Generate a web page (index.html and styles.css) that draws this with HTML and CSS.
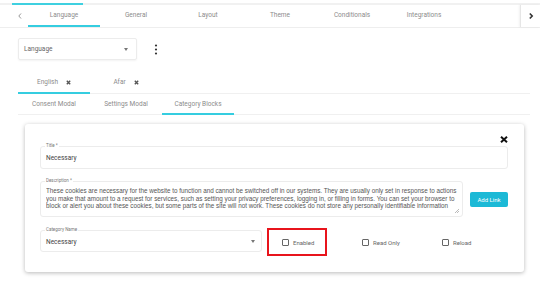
FILE: index.html
```html
<!DOCTYPE html>
<html lang="en">
<head>
    <meta charset="UTF-8">
    <meta name="viewport" content="width=device-width, initial-scale=1.0">
    <title>Cookie Consent Editor</title>
    <link rel="stylesheet" href="styles.css">
</head>
<body>
    <div class="progress"><div class="progress-bar"></div></div>

    <div class="main-tabs">
        <button class="scroll-btn left">
            <svg width="6" height="8" viewBox="0 0 6 8"><polyline points="4,1.5 1.8,4 4,6.5" fill="none" stroke="#999" stroke-width="1"/></svg>
        </button>
        <div class="tab active">Language</div>
        <div class="tab">General</div>
        <div class="tab">Layout</div>
        <div class="tab">Theme</div>
        <div class="tab">Conditionals</div>
        <div class="tab">Integrations</div>
        <div class="spacer"></div>
        <button class="scroll-btn right">
            <svg width="6" height="8" viewBox="0 0 6 8"><polyline points="1.8,1.5 4.2,4 1.8,6.5" fill="none" stroke="#333" stroke-width="1.6"/></svg>
        </button>
    </div>

    <div class="content">
        <div class="lang-row">
            <div class="select">
                <span>Language</span>
                <span class="caret"></span>
            </div>
            <button class="kebab">
                <svg width="4" height="11" viewBox="0 0 4 11"><circle cx="2" cy="1.5" r="1.1" fill="#333"/><circle cx="2" cy="5.5" r="1.1" fill="#333"/><circle cx="2" cy="9.5" r="1.1" fill="#333"/></svg>
            </button>
        </div>

        <div class="sub-tabs langs">
            <div class="tab active">English <svg class="x" width="5" height="5" viewBox="0 0 5 5"><path d="M0.8 0.8L4.2 4.2M4.2 0.8L0.8 4.2" stroke="#555" stroke-width="1.4"/></svg></div>
            <div class="tab">Afar <svg class="x" width="5" height="5" viewBox="0 0 5 5"><path d="M0.8 0.8L4.2 4.2M4.2 0.8L0.8 4.2" stroke="#555" stroke-width="1.4"/></svg></div>
        </div>

        <div class="sub-tabs">
            <div class="tab">Consent Modal</div>
            <div class="tab">Settings Modal</div>
            <div class="tab active">Category Blocks</div>
        </div>

        <div class="card">
            <div class="card-head">
                <button class="close">
                    <svg width="8" height="7" viewBox="0 0 8 7"><path d="M1 0.8L7 6.2M7 0.8L1 6.2" stroke="#111" stroke-width="2"/></svg>
                </button>
            </div>

            <fieldset class="field">
                <legend>Title *</legend>
                <div class="value">Necessary</div>
            </fieldset>

            <div class="desc-row">
                <fieldset class="field desc">
                    <legend>Description *</legend>
                    <div class="text">These cookies are necessary for the website to function and cannot be switched off in our systems. They are usually only set in response to actions<br>you make that amount to a request for services, such as setting your privacy preferences, logging in, or filling in forms. You can set your browser to<br>block or alert you about these cookies, but some parts of the site will not work. These cookies do not store any personally identifiable information</div>
                    <span class="grip"></span>
                </fieldset>
                <button class="add-link">Add Link</button>
            </div>

            <div class="cat-row">
                <fieldset class="field cat">
                    <legend>Category Name</legend>
                    <div class="value">Necessary <span class="caret"></span></div>
                </fieldset>
                <label class="check"><span class="box"></span>Enabled</label>
                <label class="check"><span class="box"></span>Read Only</label>
                <label class="check"><span class="box"></span>Reload</label>
                <div class="highlight"></div>
            </div>
        </div>
    </div>
</body>
</html>
```

FILE: styles.css
```css
* {
    margin: 0;
    padding: 0;
    box-sizing: border-box;
}

body {
    font-family: Roboto, "Liberation Sans", sans-serif;
    background: #fff;
    color: #666;
    width: 540px;
    height: 281px;
    overflow: hidden;
}

button {
    background: none;
    border: none;
    font-family: inherit;
}

.progress {
    margin-top: 3px;
    height: 2px;
    background: #f1f1f1;
}

.progress-bar {
    margin-left: 12px;
    width: 71px;
    height: 2px;
    background: #3fd0e0;
}

.main-tabs {
    display: flex;
    height: 23px;
    border-bottom: 1px solid #eee;
}

.main-tabs .tab {
    width: 72px;
    display: flex;
    align-items: center;
    justify-content: center;
    font-size: 6.5px;
    color: #8c8c8c;
    border-bottom: 2px solid transparent;
}

.main-tabs .tab.active {
    border-bottom-color: #35cde0;
}

.scroll-btn {
    width: 28px;
    display: flex;
    align-items: center;
    justify-content: flex-end;
    padding-right: 5px;
}

.scroll-btn.right {
    width: 20px;
    justify-content: center;
    padding-right: 0;
    border-left: 1px solid #e6e6e6;
    box-shadow: -1px 0 2px rgba(0, 0, 0, 0.06);
}

.spacer {
    flex: 1;
}

.content {
    padding: 10px 10px 0 18px;
}

.lang-row {
    display: flex;
    align-items: center;
    gap: 17px;
}

.select {
    width: 119px;
    height: 22px;
    border: 1px solid #ececec;
    border-radius: 2px;
    box-shadow: 0 1px 2px rgba(0, 0, 0, 0.05);
    display: flex;
    align-items: center;
    justify-content: space-between;
    padding: 0 8px 0 5px;
    font-size: 6.5px;
    color: #666;
}

.caret {
    display: inline-block;
    width: 0;
    height: 0;
    border-left: 2.5px solid transparent;
    border-right: 2.5px solid transparent;
    border-top: 3px solid #777;
}

.kebab {
    display: flex;
    align-items: center;
}

.sub-tabs {
    display: flex;
    height: 21px;
    border-bottom: 1px solid #f0f0f0;
}

.sub-tabs.langs {
    margin-top: 12px;
    height: 22px;
}

.sub-tabs .tab {
    width: 72px;
    display: flex;
    align-items: center;
    justify-content: center;
    gap: 8px;
    font-size: 6.5px;
    color: #8c8c8c;
    border-bottom: 2px solid transparent;
    margin-bottom: -1px;
}

.sub-tabs .tab.active {
    border-bottom-color: #35cde0;
}

.card {
    margin: 9px 0 0 7px;
    width: 499px;
    height: 148px;
    background: #fff;
    border-radius: 3px;
    box-shadow: 0 1px 4px rgba(0, 0, 0, 0.28);
    padding: 8px 16px 0 15px;
}

.card-head {
    display: flex;
    justify-content: flex-end;
    align-items: flex-start;
    height: 12px;
}

.close {
    display: flex;
    padding-top: 4px;
}

.field {
    border: 1px solid #ececec;
    border-radius: 3px;
    padding: 0 5px;
    min-width: 0;
}

.field legend {
    font-size: 4.5px;
    line-height: 4px;
    color: #777;
    padding: 0 1px;
    margin-left: -1px;
}

.field .value {
    height: 20px;
    display: flex;
    align-items: center;
    justify-content: space-between;
    font-size: 6.5px;
    color: #444;
}

.desc-row {
    display: flex;
    align-items: center;
    gap: 7px;
    margin-top: 10px;
}

.field.desc {
    flex: 1;
    height: 38px;
    position: relative;
}

.field.desc .text {
    font-family: "Liberation Sans", sans-serif;
    font-size: 6.3px;
    line-height: 7.5px;
    color: #555;
    margin-top: 4px;
    white-space: nowrap;
    overflow: hidden;
}

.grip {
    position: absolute;
    right: 3px;
    bottom: 3px;
    width: 4px;
    height: 4px;
    background: linear-gradient(135deg, transparent 45%, #bbb 45%, #bbb 55%, transparent 55%, transparent 70%, #bbb 70%, #bbb 80%, transparent 80%);
}

.add-link {
    width: 38px;
    height: 15px;
    background: #1cb9d6;
    color: #fff;
    font-size: 6px;
    border-radius: 2px;
    margin-top: 3px;
}

.cat-row {
    position: relative;
    display: flex;
    align-items: center;
    margin-top: 11px;
}

.field.cat {
    width: 222px;
    flex-shrink: 0;
}

.field.cat .value {
    height: 19px;
    padding-right: 1px;
}

.check {
    display: flex;
    align-items: center;
    gap: 4px;
    font-size: 6px;
    color: #666;
    width: 80px;
    flex-shrink: 0;
    margin-top: 5px;
}

.check:nth-of-type(1) {
    margin-left: 20px;
}

.box {
    width: 7px;
    height: 7px;
    border: 1px solid #666;
    border-radius: 1px;
}

.highlight {
    position: absolute;
    left: 227px;
    top: 0;
    width: 60px;
    height: 28px;
    border: 2px solid #e8141c;
}
```
